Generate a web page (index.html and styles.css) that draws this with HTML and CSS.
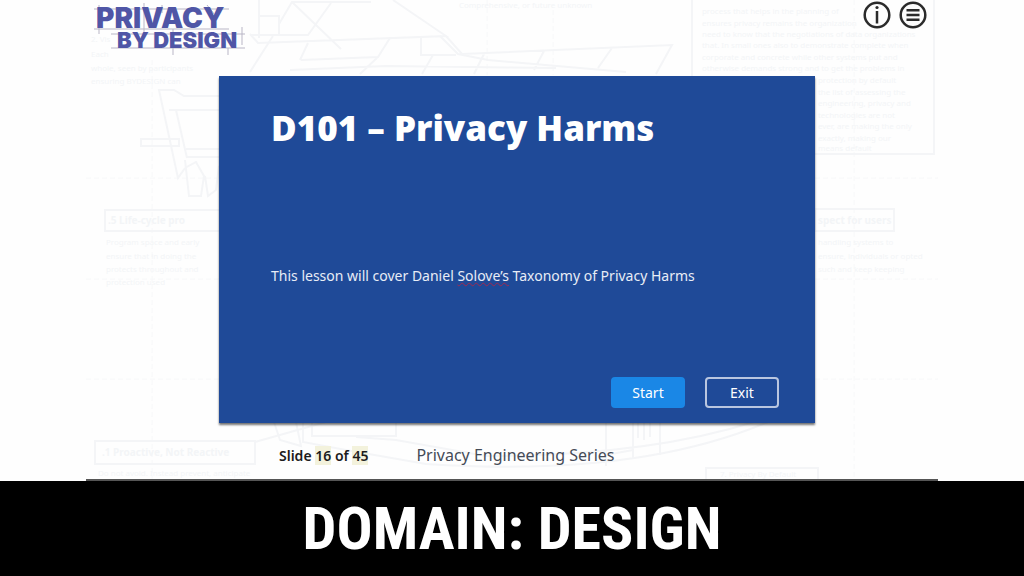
FILE: index.html
```
<!DOCTYPE html>
<html lang="en">
<head>
	<meta charset="UTF-8">
	<meta name="viewport" content="width=device-width, initial-scale=1">
	<title>Privacy by Design - D101</title>
	<link rel="stylesheet" href="styles.css">
</head>
<body>
<main class="stage">
	<!-- blueprint backdrop -->
	<svg class="blueprint" viewBox="0 0 852 480" preserveAspectRatio="xMidYMin slice" aria-hidden="true">
		<g class="dash">
			<path d="M66 60V480M401 0V75M467 10V75M768 0V480M0 178H133M0 279H133M0 379H133M729 178H852M729 279H852M729 379H852"/>
		</g>
		<g class="ink">
			<path d="M606 0V154H848V0"/>
			<path d="M133 96L98 96L88 90H73L92 178L99 168M83 110H133M90 110L101 158M100 149H133M101 157H133M55 139H93V146H55Z"/>
			<path d="M99 160L103 196H115L118 176L110 162L99 168M119 176L122 196L130 190L133 166"/>
			<path d="M173 0V38M193 24L206 2H285M164 34L172 43L360 36L307 0M164 35H222L245 3M206 2L255 49M173 16H193V34"/>
			<path d="M360 36L376 54L586 45L570 74M354 36L372 54L402 60L540 72M222 43L214 60M304 38L292 57L215 60M335 38V55H370M187 36L164 72M292 57L274 74M347 55L336 74M398 54L388 74M458 51L448 70M526 48L512 68M204 70L300 66L470 68"/>
			<rect x="19" y="210" width="150" height="21"/>
			<rect x="729" y="209" width="79" height="22"/>
			<rect x="9" y="441" width="160" height="23"/>
			<path d="M169 442L240 422M188 422L194 440L215 446L210 422M217 422V442L260 450L340 464Q550 478 682 422M270 437L310 440L400 456Q560 456 668 422M226 422V436H310V422M520 422V466M547 422V458M574 422V455M547 450L520 455M552 422V438M558 422V440M564 422V437M500 422H620"/>
			<path d="M620 480V468H732V480"/>
		</g>
		<g class="notes">
			<text x="5" y="42">2. Vis</text>
			<text x="5" y="57">Each</text>
			<text x="5" y="71">whole, seen by participants</text>
			<text x="5" y="84">ensuring BYDESIGN can</text>
			<text x="22" y="224" class="b">.5 Life-cycle pro</text>
			<text x="20" y="245">Program space and early</text>
			<text x="20" y="259">ensure that in doing the</text>
			<text x="20" y="272">protects throughout and</text>
			<text x="20" y="285">protection used</text>
			<text x="16" y="456" class="b">.1 Proactive, Not Reactive</text>
			<text x="12" y="476">Do not avoid. Instead prevent, anticipate</text>
			<text x="373" y="8">Comprehensive, or future unknown</text>
			<text x="616" y="14">process that helps in the planning of</text>
			<text x="616" y="26">ensures privacy remains the organization</text>
			<text x="616" y="37">need to know that the negotiations of data organizations</text>
			<text x="616" y="48">that. In small ones also to demonstrate complete when</text>
			<text x="616" y="60">corporate and concrete while other systems put and</text>
			<text x="616" y="71">otherwise demands strong and to get the problems in</text>
			<text x="732" y="83">protection by default</text>
			<text x="732" y="95">the list of assessing the</text>
			<text x="732" y="106">engineering, privacy and</text>
			<text x="732" y="118">technologies are not</text>
			<text x="732" y="129">ever, are making the only</text>
			<text x="732" y="141">exactly, making our</text>
			<text x="732" y="151">means default</text>
			<text x="732" y="224" class="b">spect for users</text>
			<text x="732" y="245">handling systems to</text>
			<text x="732" y="259">ensure, individuals or opted</text>
			<text x="732" y="272">such and keep keeping</text>
			<text x="634" y="477">7. Privacy By Default</text>
		</g>
	</svg>

	<header class="top">
		<svg class="logo" width="160" height="56" viewBox="0 0 160 56" role="img" aria-label="Privacy by Design">
			<path class="rule" d="M6 8H141M6 28H141M23 33H157M23 47H157M11 4V33M56 2V33M74 4V12M119 4L127 14M85 28V54M154 26V44M140 47V54"/>
			<text class="logo-a" x="8" y="27">PRIVACY</text>
			<text class="logo-b" x="29" y="47">BY DESIGN</text>
		</svg>
		<nav class="tools">
			<button type="button" class="icon" aria-label="Information">
				<svg width="28" height="28" viewBox="0 0 28 28"><circle cx="14" cy="14" r="12.3"/><path d="M14 10V22.500"/><circle class="dot" cx="14" cy="6.500" r="1.6"/></svg>
			</button>
			<button type="button" class="icon" aria-label="Menu">
				<svg width="28" height="28" viewBox="0 0 28 28"><circle cx="14" cy="14" r="12.3"/><path d="M7.500 9.300H20.500M7.500 14H20.500M7.500 18.700H20.500"/></svg>
			</button>
		</nav>
	</header>

	<section class="card">
		<h1>D101 – Privacy Harms</h1>
		<p class="intro">This lesson will cover Daniel <span class="typo">Solove’s</span> Taxonomy of Privacy Harms</p>
		<div class="actions">
			<button type="button" class="btn start">Start</button>
			<button type="button" class="btn">Exit</button>
		</div>
	</section>

	<div class="status">
		<p class="count">Slide <mark>16</mark> of <mark>45</mark></p>
		<p class="series">Privacy Engineering Series</p>
	</div>
</main>
<footer class="domain">
	<h2>DOMAIN: DESIGN</h2>
</footer>
</body>
</html>
```

FILE: styles.css
```
*{padding:0;margin:0;box-sizing:border-box;}
body{
	min-height:100vh;
	display:flex;
	flex-direction:column;
	background:#fefefe;
	font-family:"Noto Sans","Open Sans",sans-serif;
}
.stage{
	width:83.2%;
	margin:0 auto;
	flex:1;
	position:relative;
	display:grid;
	grid-template-columns:133fr 596fr 123fr;
	grid-template-rows:auto 1fr auto;
	border-bottom:2px solid #555;
}
/* backdrop */
.blueprint{
	position:absolute;
	left:0;
	top:0;
	width:100%;
	height:100%;
	overflow:hidden;
}
.ink, .dash{
	fill:none;
	stroke:#f4f5f7;
	stroke-width:2;
}
.dash{
	stroke:#f7f8f9;
	stroke-width:1;
	stroke-dasharray:5 3;
}
.notes{
	fill:#f3f5f7;
	font-size:8px;
}
.notes .b{
	font-size:10px;
	font-weight:bold;
}
/* header */
.top{
	grid-column:1 / -1;
	position:relative;
	height:76px;
	display:flex;
	justify-content:space-between;
	align-items:flex-start;
	padding:1px 11px 0 2px;
}
.logo text{
	fill:#5056a6;
	font-family:Inter,"Liberation Sans",sans-serif;
	font-weight:900;
}
.logo .logo-a{font-size:28px;}
.logo .logo-b{font-size:22px;}
.rule{
	fill:none;
	stroke:#b9b6c6;
	stroke-width:1;
}
.tools{
	display:flex;
	gap:8px;
}
.icon{
	width:28px;
	height:28px;
	border:0;
	background:none;
	cursor:pointer;
}
.icon svg{
	display:block;
	fill:none;
	stroke:#2b2b2b;
	stroke-width:2.500;
}
.icon .dot{
	fill:#2b2b2b;
	stroke:none;
}
/* slide */
.card{
	grid-column:2;
	position:relative;
	display:flex;
	flex-direction:column;
	padding:24px 36px 15px 52px;
	background:#1f4a98;
	color:#fff;
	box-shadow:0 2px 2px rgba(0,0,0,.55);
}
.card h1{
	font-size:35px;
	font-weight:900;
	line-height:56px;
}
.intro{
	margin-top:108px;
	font-size:14px;
	line-height:24px;
	color:#e8edf6;
}
.typo{
	text-decoration:underline wavy #a02850 1px;
	text-decoration-skip-ink:none;
	text-underline-offset:1px;
}
.actions{
	margin-top:auto;
	display:flex;
	justify-content:flex-end;
	gap:20px;
}
.btn{
	width:74px;
	height:31px;
	border:2px solid #b9c6e0;
	border-radius:4px;
	background:none;
	color:#fff;
	font-family:inherit;
	font-size:14px;
	cursor:pointer;
}
.btn.start{
	border-color:#1a87e6;
	background:#1a87e6;
}
/* below the slide */
.status{
	grid-column:2;
	position:relative;
	height:56px;
	display:flex;
	align-items:center;
	gap:48px;
	padding:8px 0 0 60px;
}
.count{
	font-size:14px;
	font-weight:600;
	color:#1c1c1c;
}
.count mark{
	background:#f3f2dc;
	color:inherit;
}
.series{
	font-size:16px;
	color:#454b57;
}
.domain{
	background:#000;
	color:#fff;
	text-align:center;
}
.domain h2{
	font-family:"Roboto Condensed","Liberation Sans Narrow",Roboto,sans-serif;
	font-size:60px;
	font-weight:bold;
	line-height:95px;
}
```
